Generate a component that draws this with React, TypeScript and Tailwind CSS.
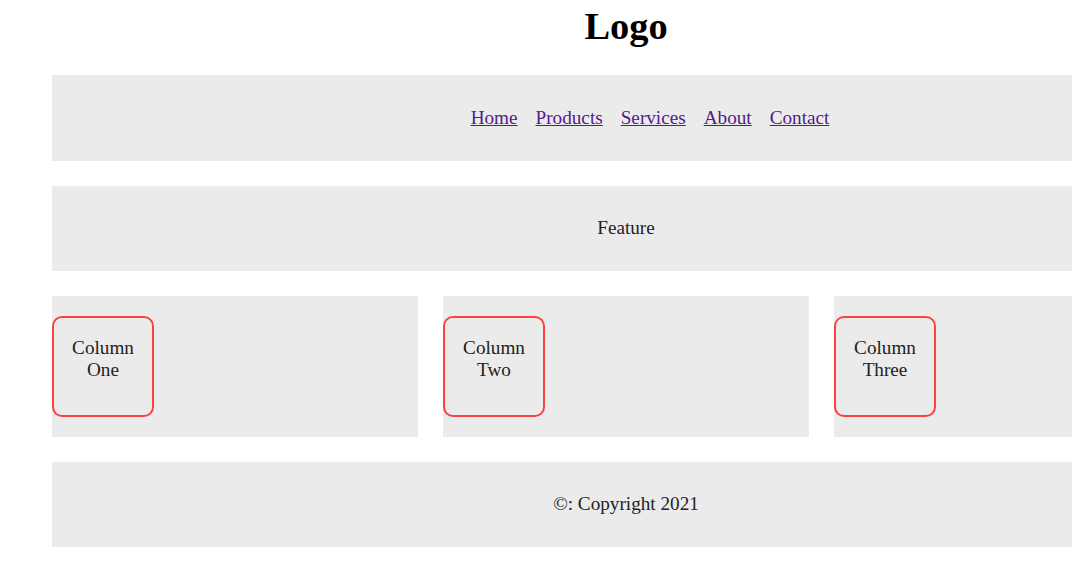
export default function App() {
  const links = ['Home', 'Products', 'Services', 'About', 'Contact']
  const columns = ['One', 'Two', 'Three']

  return (
    <div
      className="w-[1072px] overflow-hidden bg-white text-[19.2px] text-[#222]"
      style={{ fontFamily: '"Liberation Serif", "Times New Roman", serif' }}
    >
      <div className="ml-[52px] w-[1148px] flex flex-col pb-[15px]">
        <header className="h-[52px] flex items-center justify-center">
          <h1 className="text-[38.4px] font-bold text-black leading-none">Logo</h1>
        </header>

        <nav className="mt-[23px] h-[86px] bg-[#ebebeb] flex items-center justify-center pl-[48px] gap-[18px]">
          {links.map((l) => (
            <a key={l} href="#" className="text-[#551a8b] underline">
              {l}
            </a>
          ))}
        </nav>

        <section className="mt-[25px] h-[85px] bg-[#ebebeb] flex items-center justify-center">
          Feature
        </section>

        <div className="mt-[25px] grid grid-cols-3 gap-[25px]">
          {columns.map((c) => (
            <div key={c} className="h-[141px] bg-[#ebebeb] py-[20px]">
              <div className="w-[102px] h-[101px] border-2 border-[#ff4040] rounded-[10px] pt-[19px] text-center leading-[22px]">
                Column
                <br />
                {c}
              </div>
            </div>
          ))}
        </div>

        <footer className="mt-[25px] h-[85px] bg-[#ebebeb] flex items-center justify-center">
          ©: Copyright 2021
        </footer>
      </div>
    </div>
  )
}
